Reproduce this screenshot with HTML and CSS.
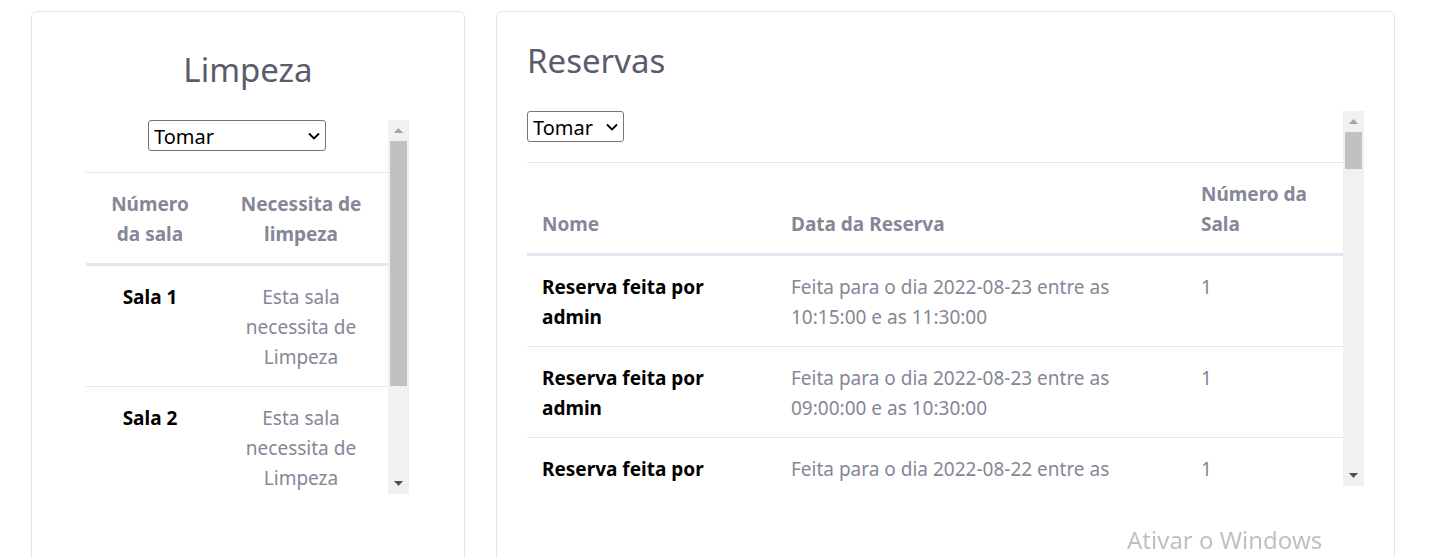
FILE: index.html
```html
<!DOCTYPE html>
<html lang="pt">
<head>
<meta charset="utf-8">
<title>Limpeza e Reservas</title>
<link rel="stylesheet" href="styles.css">
</head>
<body>
<div class="page">
  <section class="card card-limpeza">
    <h3 class="card-title">Limpeza</h3>
    <div class="scroll-box scroll-limpeza">
      <div class="scroll-content">
        <div class="select-row select-row-center">
          <div class="select-wrap select-wide">
            <select class="select"><option>Tomar</option></select>
            <svg class="chevron" width="12" height="8" viewBox="0 0 12 8"><path d="M1 1.5 L6 6.5 L11 1.5" fill="none" stroke="#000" stroke-width="1.8"/></svg>
          </div>
        </div>
        <table class="table table-center">
          <colgroup><col class="col-num"><col class="col-need"></colgroup>
          <thead>
            <tr><th>Número da sala</th><th>Necessita de limpeza</th></tr>
          </thead>
          <tbody>
            <tr><th class="row-head">Sala 1</th><td>Esta sala necessita de Limpeza</td></tr>
            <tr><th class="row-head">Sala 2</th><td>Esta sala necessita de Limpeza</td></tr>
          </tbody>
        </table>
      </div>
      <div class="scrollbar">
        <div class="sb-btn"><svg width="9" height="5" viewBox="0 0 9 5"><path d="M0 5 L4.5 0 L9 5 Z" fill="#a3a3a3"/></svg></div>
        <div class="sb-track"><div class="sb-thumb thumb-limpeza"></div></div>
        <div class="sb-btn"><svg width="9" height="5" viewBox="0 0 9 5"><path d="M0 0 L9 0 L4.5 5 Z" fill="#505050"/></svg></div>
      </div>
    </div>
  </section>

  <section class="card card-reservas">
    <h3 class="card-title">Reservas</h3>
    <div class="scroll-box scroll-reservas">
      <div class="scroll-content">
        <div class="select-row select-row-left">
          <div class="select-wrap select-narrow">
            <select class="select"><option>Tomar</option></select>
            <svg class="chevron" width="12" height="8" viewBox="0 0 12 8"><path d="M1 1.5 L6 6.5 L11 1.5" fill="none" stroke="#000" stroke-width="1.8"/></svg>
          </div>
        </div>
        <table class="table table-left">
          <colgroup><col class="col-nome"><col class="col-data"><col class="col-sala"></colgroup>
          <thead>
            <tr><th>Nome</th><th>Data da Reserva</th><th>Número da Sala</th></tr>
          </thead>
          <tbody>
            <tr><th class="row-head">Reserva feita por admin</th><td>Feita para o dia 2022-08-23 entre as 10:15:00 e as 11:30:00</td><td>1</td></tr>
            <tr><th class="row-head">Reserva feita por admin</th><td>Feita para o dia 2022-08-23 entre as 09:00:00 e as 10:30:00</td><td>1</td></tr>
            <tr><th class="row-head">Reserva feita por admin</th><td>Feita para o dia 2022-08-22 entre as 14:00:00 e as 15:30:00</td><td>1</td></tr>
          </tbody>
        </table>
      </div>
      <div class="scrollbar">
        <div class="sb-btn"><svg width="9" height="5" viewBox="0 0 9 5"><path d="M0 5 L4.5 0 L9 5 Z" fill="#a3a3a3"/></svg></div>
        <div class="sb-track"><div class="sb-thumb thumb-reservas"></div></div>
        <div class="sb-btn"><svg width="9" height="5" viewBox="0 0 9 5"><path d="M0 0 L9 0 L4.5 5 Z" fill="#505050"/></svg></div>
      </div>
    </div>
  </section>
</div>
<div class="watermark">Ativar o Windows</div>
</body>
</html>
```
FILE: styles.css
```css
* { box-sizing: border-box; }
html, body { margin: 0; height: 100%; overflow: hidden; background: #fff; }
body {
  font-family: "Noto Sans", "Open Sans", sans-serif;
  font-size: 19px;
  line-height: 30px;
  color: #858796;
}
.page {
  display: flex;
  align-items: flex-start;
  gap: 31px;
  padding: 11px 0 0 31px;
}
.card {
  border: 1px solid #e3e6f0;
  border-radius: 6px;
  background: #fff;
  height: 640px;
}
.card-limpeza { width: 434px; padding: 38px 0 0; }
.card-reservas { width: 899px; padding: 29px 30px 0; }
.card-title {
  margin: 0 0 30px;
  font-size: 33px;
  line-height: 40px;
  font-weight: 400;
  color: #5a5c69;
}
.card-limpeza .card-title { text-align: center; }

.scroll-box { display: flex; }
.scroll-limpeza { width: 323px; height: 374px; margin-left: 54px; }
.scroll-reservas { height: 375px; }
.scroll-content { flex: 1; min-width: 0; overflow: hidden; }

.scrollbar {
  width: 21px;
  flex: none;
  background: #f1f1f1;
  display: flex;
  flex-direction: column;
}
.sb-btn { height: 21px; display: flex; align-items: center; justify-content: center; }
.sb-btn svg { display: block; }
.sb-track { flex: 1; padding: 0 2px; }
.sb-thumb { background: #c1c1c1; }
.thumb-limpeza { height: 245px; }
.thumb-reservas { height: 37px; }

.select-row { display: flex; }
.select-row-center { justify-content: center; margin-bottom: 21px; }
.select-row-left { justify-content: flex-start; margin-bottom: 20px; }
.select-wrap { position: relative; height: 31px; }
.select-wide { width: 178px; }
.select-narrow { width: 97px; }
.select {
  appearance: none;
  -webkit-appearance: none;
  width: 100%;
  height: 31px;
  margin: 0;
  padding: 1px 0 0 5px;
  border: 1px solid #767676;
  border-radius: 3px;
  background: #fff;
  font-family: inherit;
  font-size: 20px;
  color: #000;
}
.chevron { position: absolute; right: 6px; top: 12px; pointer-events: none; }

.table {
  width: 100%;
  table-layout: fixed;
  border-collapse: separate;
  border-spacing: 0;
}
.table th, .table td {
  padding: 16px 15px 14px;
  vertical-align: top;
}
.table thead th {
  vertical-align: bottom;
  font-weight: 700;
  color: #858796;
  border-top: 1px solid #e3e6f0;
  border-bottom: 3px solid #e3e6f0;
}
.table tbody tr + tr th, .table tbody tr + tr td { border-top: 1px solid #e3e6f0; }
.table .row-head { font-weight: 700; color: #000; }
.table td { font-weight: 400; color: #858796; }
.table-center th, .table-center td { text-align: center; }
.table-left th, .table-left td { text-align: left; }
.col-num { width: 128px; }
.col-need { width: 174px; }
.col-nome { width: 249px; }
.col-data { width: 410px; }
.col-sala { width: 158px; }

.watermark {
  position: fixed;
  left: 1127px;
  top: 523px;
  font-size: 24px;
  line-height: 34px;
  color: rgba(140, 140, 140, 0.55);
  pointer-events: none;
}
```
